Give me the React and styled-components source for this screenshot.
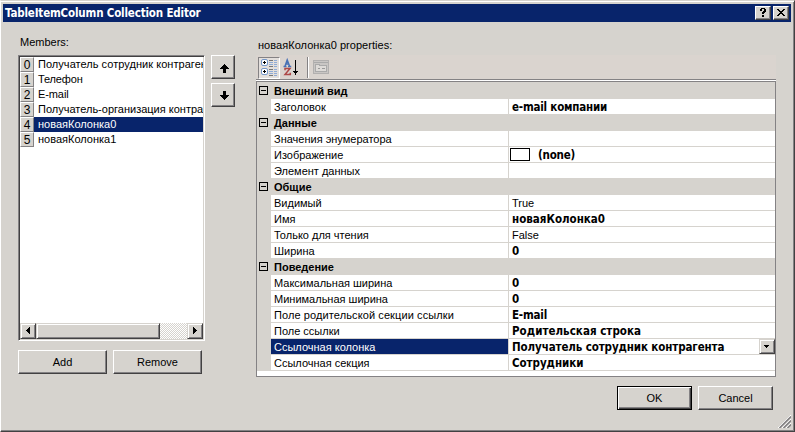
import React from 'react';
import styled, { createGlobalStyle, css } from 'styled-components';

const face = '#d6d3ce';
const navy = '#08246b';

const Global = createGlobalStyle`
  *, *::before, *::after { box-sizing: border-box; }
  body { margin: 0; background: ${face}; overflow: hidden; }
`;

const raised = css`
  background: ${face};
  border: 1px solid;
  border-color: #fff #424142 #424142 #fff;
  box-shadow: inset -1px -1px 0 #848284;
`;

const Dialog = styled.div`
  position: relative;
  width: 795px;
  height: 432px;
  padding: 2px 2px 0 2px;
  background: ${face};
  border: 1px solid;
  border-color: ${face} #424142 #424142 #fff;
  box-shadow: inset 0 1px 0 #fff, inset -1px -1px 0 #848284;
  font: 11px/14px 'Liberation Sans', Arial, sans-serif;
  color: #000;
  white-space: nowrap;
`;

const TitleBar = styled.header`
  display: flex;
  align-items: center;
  width: 788px;
  height: 18px;
  margin-top: 1px;
  padding: 0 2px 0 2px;
  background: ${navy};
`;

const Title = styled.h1`
  flex: 1;
  margin: 0;
  color: #fff;
  font: bold 11.5px/18px 'DejaVu Sans Condensed', 'DejaVu Sans', sans-serif;
  letter-spacing: -0.17px;
`;

const CaptionButton = styled.button`
  ${raised}
  display: flex;
  width: 16px;
  height: 14px;
  margin-left: 2px;
  padding: 0;
  svg { display: block; }
`;

const Body = styled.main`
  display: flex;
  align-items: flex-start;
  padding-left: 15px;
`;

const MembersPane = styled.section`
  width: 187px;
  padding-top: 13px;
`;

const Label = styled.div`
  height: 20px;
  padding-left: 2px;
  line-height: 14px;
  letter-spacing: ${(p) => p.$spacing || 0}px;
`;

const ListBox = styled.div`
  display: flex;
  flex-direction: column;
  width: 187px;
  height: 286px;
  background: #fff;
  border: 1px solid;
  border-color: #848284 #fff #fff #848284;
  box-shadow: inset 1px 1px 0 #424142, inset -1px -1px 0 ${face};
  padding: 1px;
`;

const Items = styled.ul`
  flex: 1;
  margin: 0;
  padding: 0;
  list-style: none;
  overflow: hidden;
`;

const Item = styled.li`
  display: flex;
  height: 15px;
`;

const Index = styled.span`
  width: 14px;
  height: 15px;
  flex: none;
  background: ${face};
  border: 1px solid;
  border-color: #fff #848284 #848284 #fff;
  text-align: center;
  line-height: 14px;
  font-size: 12px;
`;

const ItemName = styled.span`
  flex: 1;
  min-width: 0;
  overflow: hidden;
  padding-left: 4px;
  line-height: 15px;
  letter-spacing: ${(p) => p.$spacing || 0}px;
  background: ${(p) => (p.$selected ? navy : 'transparent')};
  color: ${(p) => (p.$selected ? '#fff' : '#000')};
`;

const ScrollBar = styled.div`
  display: flex;
  height: 16px;
  background: repeating-conic-gradient(#fff 0 25%, ${face} 0 50%) 0 0 / 2px 2px;
`;

const scrollPart = css`
  background: ${face};
  border: 1px solid;
  border-color: ${face} #424142 #424142 ${face};
  box-shadow: inset 1px 1px 0 #fff, inset -1px -1px 0 #848284;
`;

const ScrollButton = styled.button`
  ${scrollPart}
  width: 16px;
  height: 16px;
  padding: 0;
  margin-left: ${(p) => (p.$end ? 'auto' : 0)};
  svg { display: block; }
`;

const Thumb = styled.div`
  ${scrollPart}
  width: 124px;
`;

const MoveButtons = styled.div`
  display: flex;
  flex-direction: column;
  gap: 4px;
  margin: 33px 0 0 6px;
`;

const MoveButton = styled.button`
  ${raised}
  display: flex;
  width: 24px;
  height: 24px;
  padding: 0;
`;

const ButtonRow = styled.div`
  display: flex;
  gap: ${(p) => p.$gap}px;
`;

const PushButton = styled.button`
  ${raised}
  width: ${(p) => p.$width}px;
  height: 24px;
  padding: 0;
  color: #000;
  font: 11px/20px 'Liberation Sans', Arial, sans-serif;
  ${(p) =>
    p.$default &&
    css`
      border-color: #000;
      box-shadow: inset 1px 1px 0 #fff, inset -1px -1px 0 #424142, inset -2px -2px 0 #848284;
    `}
`;

const MemberActions = styled(ButtonRow)`
  margin-top: 9px;
`;

const PropertiesPane = styled.section`
  width: 520px;
  margin-left: 21px;
  padding-top: 16px;
`;

const ToolBar = styled.div`
  display: flex;
  align-items: flex-start;
  height: 25px;
  margin-top: -3px;
  padding: 2px 0 0 2px;
  background: #dad4cf;
  border-bottom: 1px solid #848284;
  box-shadow: 0 1px 0 #fff;
  svg { display: block; }
`;

const ToggleTool = styled.button`
  width: 22px;
  height: 22px;
  padding: 0;
  background: #e3dfdc;
  border: 1px solid;
  border-color: #848284 #fff #fff #848284;
`;

const Tool = styled.button`
  width: 22px;
  height: 22px;
  padding: 0;
  border: 0;
  background: none;
`;

const ToolSeparator = styled.div`
  width: 2px;
  height: 21px;
  margin: 0 2px 0 5px;
  border-left: 1px solid #848284;
  border-right: 1px solid #fff;
`;

const Grid = styled.div`
  height: 296px;
  margin-top: 1px;
  padding-top: 1px;
  border: 1px solid #848284;
  background: linear-gradient(${face} 0 1px, #fff 1px);
`;

const Category = styled.div`
  display: flex;
  align-items: flex-start;
  height: 16px;
  padding-left: 2px;
  background: ${face};
  font-weight: bold;
  line-height: 16px;
  svg { flex: none; margin: 3px 6px 0 0; }
`;

const PropertyRow = styled.div`
  display: grid;
  grid-template-columns: 237px 1px 266px;
  height: 16px;
  border-left: 14px solid ${face};
  border-bottom: 1px solid ${face};
  line-height: 16px;
`;

const Name = styled.span`
  height: 15px;
  padding-left: 3px;
  letter-spacing: ${(p) => p.$spacing || 0}px;
  background: ${(p) => (p.$selected ? navy : '#fff')};
  color: ${(p) => (p.$selected ? '#fff' : '#000')};
`;

const Divider = styled.span`
  background: ${face};
`;

const Value = styled.span`
  display: flex;
  align-items: flex-start;
  height: 15px;
  padding-left: ${(p) => (p.$swatch ? 1 : 3)}px;
  ${(p) => p.$bold && css`font: bold 11.5px/16px 'DejaVu Sans Condensed', 'DejaVu Sans', sans-serif;`}
  letter-spacing: ${(p) => p.$spacing || 0}px;
`;

const Swatch = styled.span`
  width: 20px;
  height: 13px;
  margin: 1px 8px 0 0;
  border: 1px solid #000;
  background: #fff;
`;

const DropButton = styled.button`
  ${scrollPart}
  width: 16px;
  height: 15px;
  margin-left: auto;
  padding: 0;
  svg { display: block; }
`;

const DialogActions = styled(ButtonRow)`
  justify-content: flex-end;
  margin: 9px 3px 0 0;
`;

const Grip = styled.svg`
  position: absolute;
  right: 3px;
  bottom: 3px;
`;

const Arrow = ({ down }) => (
  <svg width="22" height="22" shapeRendering="crispEdges">
    <g transform={down ? 'matrix(1 0 0 -1 0 24)' : undefined}>
      <path d="M12 8h1v1h1v1h1v1h1v1h1v1h-3v4h-3v-4H8v-1h1v-1h1v-1h1V9h1z" />
    </g>
  </svg>
);

const Triangle = ({ left }) => (
  <svg width="14" height="14" shapeRendering="crispEdges">
    <path d={left ? 'M8 3h1v7H8V9H7V8H6V7H5V6h1V5h1V4h1z' : 'M5 3h1v1h1v1h1v1h1v1H8v1H7v1H6v1H5z'} />
  </svg>
);

const Collapse = () => (
  <svg width="9" height="9" shapeRendering="crispEdges">
    <path d="M.5.5h8v8h-8zM2 4.5h5" fill="none" stroke="#000" />
  </svg>
);

const CategorizedIcon = () => (
  <svg width="20" height="20">
    {[2, 11].map((y) => (
      <g key={y}>
        <rect x="2.5" y={y - 0.5} width="6" height="6" rx="1.5" fill="#fff" stroke="#7497c9" />
        <path d={`M4 ${y + 2.5}h3M5.5 ${y + 1}v3`} stroke="#000" />
        <path d={`M10 ${y + 0.5}h4M10 ${y + 6.5}h4`} stroke="#777" />
        <path
          d={`M10 ${y + 2.5}h4M10 ${y + 4.5}h4M15 ${y + 0.5}h3M15 ${y + 2.5}h3M15 ${y + 4.5}h3M15 ${y + 6.5}h3`}
          stroke="#8fabd6"
        />
      </g>
    ))}
  </svg>
);

const SortIcon = () => (
  <svg width="22" height="22" fill="none">
    <path d="M3.5 9.4h3M8 9.4h3.2M5 9.2L7.2 3l2.4 6.2M6 7h3" stroke="#4670b5" strokeWidth="1.5" />
    <path d="M5 13.2v-1.7h5L5 17.4h5.3v-1.7" stroke="#ad4848" strokeWidth="1.5" />
    <path d="M15.5 3v12" stroke="#000" />
    <path d="M13 14h5v1h-1v1h-1v2h-1v-2h-1v-1h-1z" fill="#000" shapeRendering="crispEdges" />
  </svg>
);

const PagesIcon = () => (
  <svg width="22" height="22" fill="none" shapeRendering="crispEdges">
    <path d="M2.5 3.5h15v13h-15z" fill="#c9c6c4" stroke="#b2b0af" />
    <path d="M3 5.5h14" stroke="#aaa" />
    <path d="M4.5 14.5v-7h4v1h7v6z" fill="#dedbd8" stroke="#aaa" />
    <path d="M7 11.5h2M11 11.5h3" stroke="#999" />
  </svg>
);

const members = [
  ['Получатель сотрудник контрагента', 0.04],
  ['Телефон', -0.15],
  ['E-mail', -0.1],
  ['Получатель-организация контрагент', 0],
  ['новаяКолонка0', 0],
  ['новаяКолонка1', 0],
];

const groups = [
  { name: 'Внешний вид', rows: [{ name: 'Заголовок', value: 'e-mail компании', bold: true, spacing: -0.2 }] },
  {
    name: 'Данные',
    rows: [
      { name: 'Значения энумератора' },
      { name: 'Изображение', value: '(none)', bold: true, swatch: true, spacing: -0.2 },
      { name: 'Элемент данных' },
    ],
  },
  {
    name: 'Общие',
    rows: [
      { name: 'Видимый', value: 'True' },
      { name: 'Имя', value: 'новаяКолонка0', bold: true },
      { name: 'Только для чтения', value: 'False' },
      { name: 'Ширина', value: '0', bold: true },
    ],
  },
  {
    name: 'Поведение',
    rows: [
      { name: 'Максимальная ширина', value: '0', bold: true },
      { name: 'Минимальная ширина', value: '0', bold: true },
      { name: 'Поле родительской секции ссылки', value: 'E-mail', bold: true, nameSpacing: 0.1, spacing: -0.2 },
      { name: 'Поле ссылки', value: 'Родительская строка', bold: true, spacing: 0.03 },
      {
        name: 'Ссылочная колонка',
        value: 'Получатель сотрудник контрагента',
        bold: true,
        spacing: -0.11,
        selected: true,
      },
      { name: 'Ссылочная секция', value: 'Сотрудники', bold: true, spacing: -0.05 },
    ],
  },
];

export default function App() {
  return (
    <>
      <Global />
      <Dialog>
        <TitleBar>
          <Title>TableItemColumn Collection Editor</Title>
          <CaptionButton aria-label="Help">
            <svg width="14" height="12" shapeRendering="crispEdges">
              <path d="M5 1h4v1h1v3H9v1H8v1H6V5h1V4h1V2H6v2H4V2h1zM6 8h2v2H6z" />
            </svg>
          </CaptionButton>
          <CaptionButton aria-label="Close">
            <svg width="14" height="12" shapeRendering="crispEdges">
              <path d="M3 2h2v1h1v1h2V3h1V2h2v1h-1v1H9v1H8v1h1v1h1v1h1v1H9V8H8V7H6v1H5v1H3V8h1V7h1V6h1V5H5V4H4V3H3z" />
            </svg>
          </CaptionButton>
        </TitleBar>
        <Body>
          <MembersPane>
            <Label>Members:</Label>
            <ListBox>
              <Items>
                {members.map(([name, spacing], i) => (
                  <Item key={name}>
                    <Index>{i}</Index>
                    <ItemName $selected={i === 4} $spacing={spacing}>{name}</ItemName>
                  </Item>
                ))}
              </Items>
              <ScrollBar>
                <ScrollButton aria-label="Scroll left"><Triangle left /></ScrollButton>
                <Thumb />
                <ScrollButton $end aria-label="Scroll right"><Triangle /></ScrollButton>
              </ScrollBar>
            </ListBox>
            <MemberActions $gap={6}>
              <PushButton $width={89}>Add</PushButton>
              <PushButton $width={89}>Remove</PushButton>
            </MemberActions>
          </MembersPane>
          <MoveButtons>
            <MoveButton aria-label="Move up"><Arrow /></MoveButton>
            <MoveButton aria-label="Move down"><Arrow down /></MoveButton>
          </MoveButtons>
          <PropertiesPane>
            <Label $spacing={0.04}>новаяКолонка0 properties:</Label>
            <ToolBar>
              <ToggleTool aria-label="Categorized"><CategorizedIcon /></ToggleTool>
              <Tool aria-label="Alphabetical"><SortIcon /></Tool>
              <ToolSeparator />
              <Tool aria-label="Property pages"><PagesIcon /></Tool>
            </ToolBar>
            <Grid>
              {groups.map((group) => (
                <React.Fragment key={group.name}>
                  <Category>
                    <Collapse />
                    {group.name}
                  </Category>
                  {group.rows.map((row) => (
                    <PropertyRow key={row.name}>
                      <Name $selected={row.selected} $spacing={row.nameSpacing}>{row.name}</Name>
                      <Divider />
                      <Value $bold={row.bold} $spacing={row.spacing} $swatch={row.swatch}>
                        {row.swatch && <Swatch />}
                        {row.value}
                        {row.selected && (
                          <DropButton aria-label="Open list">
                            <svg width="14" height="13" shapeRendering="crispEdges">
                              <path d="M4 5h5v1H8v1H7v1H6V7H5V6H4z" />
                            </svg>
                          </DropButton>
                        )}
                      </Value>
                    </PropertyRow>
                  ))}
                </React.Fragment>
              ))}
            </Grid>
            <DialogActions $gap={6}>
              <PushButton $width={75} $default>OK</PushButton>
              <PushButton $width={75}>Cancel</PushButton>
            </DialogActions>
          </PropertiesPane>
        </Body>
        <Grip width="13" height="13">
          <path d="M0 13L13 0M4 13l9-9M8 13l5-5" stroke="#fff" />
          <path d="M1.5 13L13 1.5M5.5 13L13 5.5M9.5 13L13 9.5" stroke="#848284" strokeWidth="1.6" />
        </Grip>
      </Dialog>
    </>
  );
}
